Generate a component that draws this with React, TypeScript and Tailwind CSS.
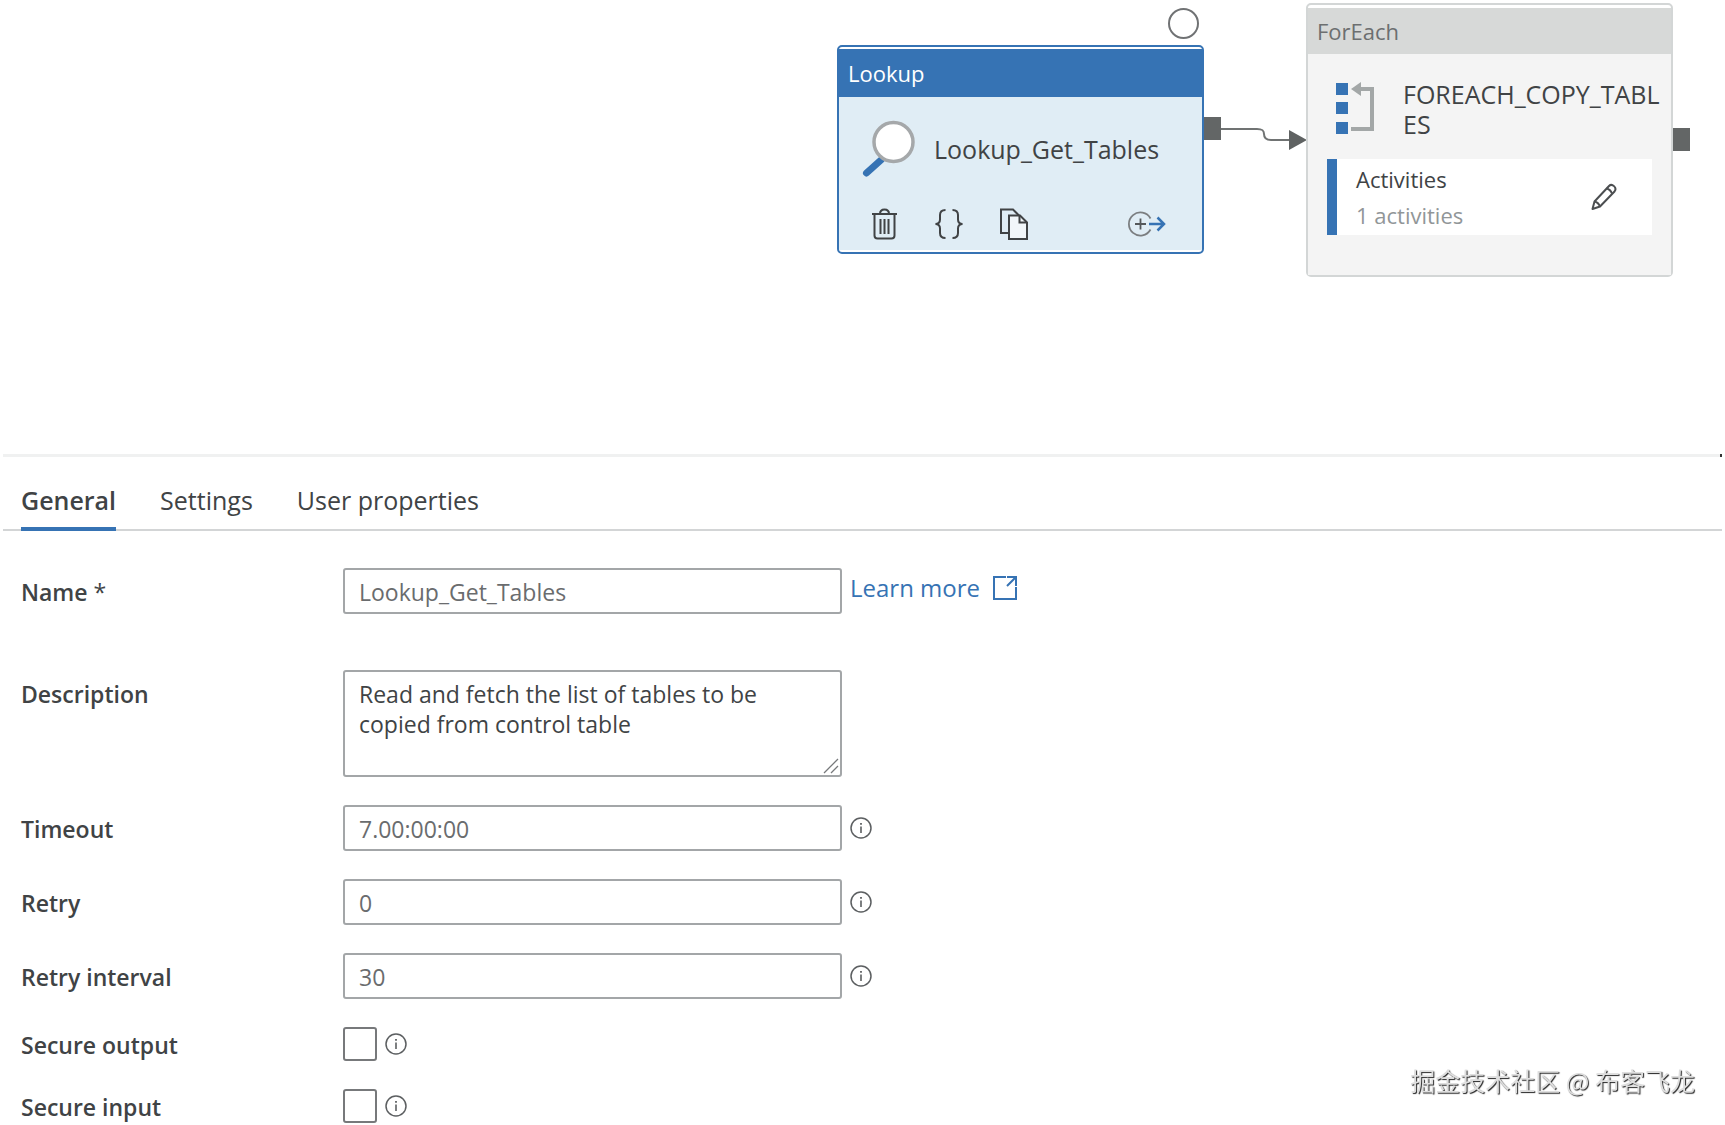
import React, { useState } from 'react';

function InfoIcon() {
  return (
    <svg viewBox="0 0 22 22" className="h-[22px] w-[22px] shrink-0 text-[#5c5f61]" fill="none" stroke="currentColor">
      <circle cx="11" cy="11" r="10" strokeWidth="1.5" />
      <path d="M11 9.5v6.5" strokeWidth="1.6" />
      <path d="M11 6v1.8" strokeWidth="1.8" />
    </svg>
  );
}

type FieldProps = {
  id: string;
  label: string;
  value: string;
};

function Field({ id, label, value }: FieldProps) {
  const [text, setText] = useState(value);

  return (
    <div className="flex items-center">
      <label htmlFor={id} className="w-[322px] shrink-0 pt-[2px] font-semibold">
        {label}
      </label>
      <input
        id={id}
        type="text"
        value={text}
        onChange={(e) => setText(e.target.value)}
        className="h-[46px] w-[499px] rounded-[3px] border-2 border-[#a3a6a8] bg-white px-3.5 pt-[2px] text-[#6a6c6e]"
      />
      <button type="button" aria-label={`About ${label}`} className="ml-2">
        <InfoIcon />
      </button>
    </div>
  );
}

function Toggle({ id, label }: { id: string; label: string }) {
  return (
    <div className="flex items-center">
      <label htmlFor={id} className="w-[322px] shrink-0 pt-[2px] font-semibold">
        {label}
      </label>
      <input
        id={id}
        type="checkbox"
        className="h-[34px] w-[34px] appearance-none rounded-[3px] border-2 border-[#77797b] bg-white checked:bg-[#3673b4]"
      />
      <button type="button" aria-label={`About ${label}`} className="ml-2">
        <InfoIcon />
      </button>
    </div>
  );
}

function LookupNode() {
  return (
    <div className="absolute left-[837px] top-[45px] w-[367px] rounded-[5px] border-2 border-[#3673b4] bg-white py-[2px]">
      <div className="flex h-[48px] items-center bg-[#3673b4] px-[9px] text-[22px] text-white">Lookup</div>
      <div className="bg-[#e0edf5]">
        <div className="flex h-[104px] items-center gap-[19px] pl-[22px]">
          <svg viewBox="0 0 54 60" className="h-[60px] w-[54px] shrink-0" fill="none">
            <path d="M20 41L5.500 54" stroke="#3673b4" strokeWidth="7" strokeLinecap="round" />
            <circle cx="32.500" cy="23" r="19.500" fill="#fff" stroke="#a5a8aa" strokeWidth="3.500" />
          </svg>
          <span className="text-[25px]">Lookup_Get_Tables</span>
        </div>
        <div className="flex h-[49px] items-center pb-1 pl-8 pr-9 text-[#404345]">
          <button type="button" aria-label="Delete">
            <svg viewBox="0 0 28 32" className="h-8 w-7" fill="none" stroke="currentColor" strokeWidth="2">
              <path d="M1 6h25M9 6c0-3 1.500-4.500 4.500-4.500S18 3 18 6M3.500 6v21.500c0 2 1 3 3 3h14c2 0 3-1 3-3V6" />
              <path d="M9.500 11v15M13.500 11v15M17.500 11v15" />
            </svg>
          </button>
          <button type="button" aria-label="Code" className="ml-[35px]">
            <svg viewBox="0 0 30 32" className="h-8 w-[30px]" fill="none" stroke="currentColor" strokeWidth="2">
              <path d="M11.500 2C7.500 2 6 3.500 6 7v4.500C6 14.500 4.500 15.800 1.500 16 4.500 16.200 6 17.500 6 20.500V25c0 3.500 1.500 5 5.500 5" />
              <path d="M18.500 2C22.500 2 24 3.500 24 7v4.500c0 3 1.500 4.300 4.500 4.500-3 .2-4.500 1.500-4.500 4.500V25c0 3.500-1.500 5-5.500 5" />
            </svg>
          </button>
          <button type="button" aria-label="Clone" className="ml-[34px]">
            <svg viewBox="0 0 32 32" className="h-8 w-8" fill="none" stroke="currentColor" strokeWidth="2">
              <path d="M11 25H3V1.500h12L21 7.500" />
              <path d="M11 7.500h11l7 7V31H11z" fill="#f1f6f9" />
              <path d="M21.500 7.500v7H29" />
            </svg>
          </button>
          <button type="button" aria-label="Add output" className="ml-auto">
            <svg viewBox="0 0 38 26" className="h-[26px] w-[38px]" fill="none">
              <path d="M22.500 7.500a11.500 11.500 0 1 0 0 11" stroke="#7b7e80" strokeWidth="1.800" />
              <path d="M12.500 7.500v11M7 13h11" stroke="#55585a" strokeWidth="1.800" />
              <path d="M21 13h15M29.500 6.500L36 13l-6.500 6.500" stroke="#3673b4" strokeWidth="2.500" />
            </svg>
          </button>
        </div>
      </div>
    </div>
  );
}

function ForEachNode() {
  return (
    <div className="absolute left-[1306px] top-[3px] h-[274px] w-[367px] rounded-[5px] border-2 border-[#d3d6d6] bg-white pt-[3px]">
      <div className="flex h-full flex-col bg-[#f4f4f4]">
        <div className="flex h-[46px] shrink-0 items-center bg-[#d7d9d8] px-[9px] text-[22px] text-[#6c6f70]">ForEach</div>
        <div className="mt-[25px] flex pl-[27px]">
          <svg viewBox="0 0 42 54" className="mt-[3px] h-[54px] w-[42px] shrink-0" fill="none">
            <path d="M1 1h12v12H1zM1 20h12v12H1zM1 40h12v12H1z" fill="#3673b4" />
            <path d="M22 7h15v40H16" stroke="#a3a7a7" strokeWidth="4" />
            <path d="M16 7l10-7v14z" fill="#a3a7a7" />
          </svg>
          <span className="ml-[26px] w-[264px] break-all text-[25px] leading-[30px]">FOREACH_COPY_TABLES</span>
        </div>
        <div className="ml-[19px] mr-[19px] mt-5 flex h-[76px] items-center justify-between border-l-[10px] border-[#3673b4] bg-white pl-[19px] pr-[35px]">
          <div className="text-[22px] leading-[36px]">
            <div>Activities</div>
            <div className="text-[#919698]">1 activities</div>
          </div>
          <button type="button" aria-label="Edit activities">
            <svg viewBox="0 0 26 28" className="h-7 w-[26px]" fill="none" stroke="#4b4e50" strokeWidth="2" strokeLinejoin="round">
              <path d="M1.500 26l2-7.500L18 3c3-3 8.500 1.500 5.500 5.500L9 23.500z" />
              <path d="M3.500 18.500c2.500.5 4.500 2.500 5.500 5M15.500 5.500c2.500.5 4.500 2.500 5.500 5" />
            </svg>
          </button>
        </div>
      </div>
    </div>
  );
}

function Canvas() {
  return (
    <section className="relative h-[454px] overflow-hidden">
      <div className="absolute left-[1168px] top-[8px] h-[31px] w-[31px] rounded-full border-2 border-[#707274]" />
      <svg viewBox="0 0 104 44" className="absolute left-[1204px] top-[112px] h-[44px] w-[104px]" fill="none">
        <path d="M16 17h37c5 0 7 1 7 5s2 6 7 6h20" stroke="#707373" strokeWidth="2" />
        <path d="M85 18l18 10-18 10z" fill="#5f6262" />
      </svg>
      <div className="absolute left-[1204px] top-[117px] h-[23px] w-[17px] bg-[#636666]" />
      <div className="absolute left-[1673px] top-[128px] h-[23px] w-[17px] bg-[#636666]" />
      <LookupNode />
      <ForEachNode />
    </section>
  );
}

const tabs = ['General', 'Settings', 'User properties'];

function App() {
  const [activeTab, setActiveTab] = useState('General');
  const [description, setDescription] = useState(
    'Read and fetch the list of tables to be copied from control table',
  );

  return (
    <main className="min-h-screen bg-white font-['Open_Sans','Noto_Sans',sans-serif] text-[23px] leading-[30px] text-[#404345]">
      <Canvas />
      <section className="px-[3px]">
        <div className="flex h-[3px] justify-end bg-[#f0f1f1]">
          <span className="w-[2px] bg-[#333]" />
        </div>
        <div role="tablist" className="flex h-[74px] items-stretch gap-11 border-b-2 border-[#d3d5d6] px-[18px] text-[25px]">
          {tabs.map((tab) => (
            <button
              key={tab}
              type="button"
              role="tab"
              aria-selected={tab === activeTab}
              onClick={() => setActiveTab(tab)}
              className={`-mb-[2px] border-b-4 pt-4 ${
                tab === activeTab ? 'border-[#3673b4] font-semibold' : 'border-transparent'
              }`}
            >
              {tab}
            </button>
          ))}
        </div>
        <form className="px-[18px] pt-[37px]">
          <div className="flex flex-col gap-7">
            <div className="mb-7 flex items-center">
              <label htmlFor="name" className="w-[322px] shrink-0 pt-[2px] font-semibold">
                Name <span className="font-normal">*</span>
              </label>
              <input
                id="name"
                type="text"
                defaultValue="Lookup_Get_Tables"
                className="h-[46px] w-[499px] rounded-[3px] border-2 border-[#a3a6a8] bg-white px-3.5 pt-[2px] text-[#6a6c6e]"
              />
              <a href="#learn-more" className="mb-1.5 ml-2 flex items-center gap-3 text-[24px] text-[#3673b4]">
                Learn more
                <svg viewBox="0 0 26 26" className="h-[26px] w-[26px]" fill="none" stroke="currentColor" strokeWidth="2">
                  <path d="M14 2H2v22h22V12" />
                  <path d="M15 2h9v9M24 2L15 11" />
                </svg>
              </a>
            </div>
            <div className="flex items-start">
              <label htmlFor="description" className="w-[322px] shrink-0 pt-[9px] font-semibold">
                Description
              </label>
              <div className="relative flex">
                <textarea
                  id="description"
                  value={description}
                  onChange={(e) => setDescription(e.target.value)}
                  className="h-[107px] w-[499px] resize-none rounded-[3px] border-2 border-[#a3a6a8] bg-white py-[7px] pl-3.5 pr-10"
                />
                <svg viewBox="0 0 16 16" className="absolute bottom-[3px] right-[3px] h-4 w-4" fill="none" stroke="#77797b" strokeWidth="1.300">
                  <path d="M1 15L15 1M8 15l7-7" />
                </svg>
              </div>
            </div>
            <Field id="timeout" label="Timeout" value="7.00:00:00" />
            <Field id="retry" label="Retry" value="0" />
            <Field id="retry-interval" label="Retry interval" value="30" />
          </div>
          <div className="mt-7 flex flex-col gap-7">
            <Toggle id="secure-output" label="Secure output" />
            <Toggle id="secure-input" label="Secure input" />
          </div>
        </form>
      </section>
      <div className="fixed bottom-[27px] right-[30px] font-['Noto_Sans_CJK_SC',sans-serif] text-[25px] leading-[36px] text-[#dedede] [text-shadow:1px_1px_1px_#222]">
        掘金技术社区 @ 布客飞龙
      </div>
    </main>
  );
}

export default App;
